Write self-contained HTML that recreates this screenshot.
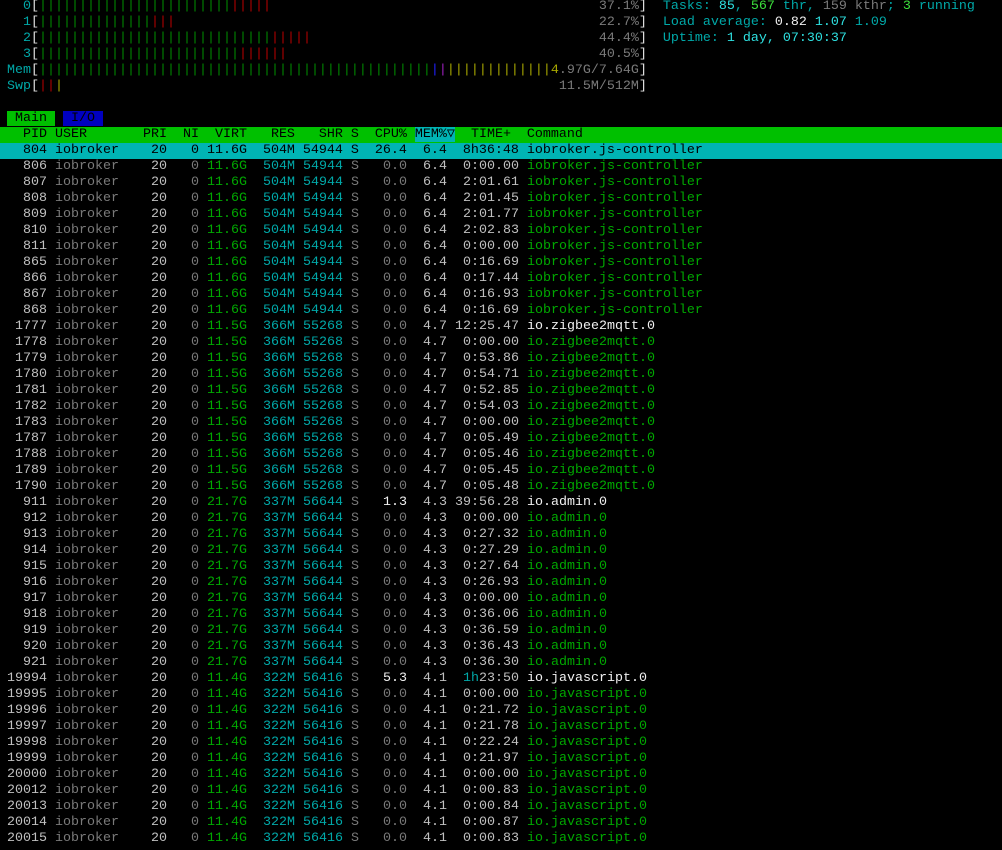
<!DOCTYPE html>
<html><head><meta charset="utf-8"><style>
html,body{margin:0;padding:0;background:#000;width:1002px;height:850px;overflow:hidden}
.s{position:absolute;top:-1px;left:0;width:1002px;font-family:"Liberation Mono","DejaVu Sans Mono",monospace;font-size:13.333px;line-height:16px;color:#c0c0c0}
.l{height:16px;white-space:pre;padding-left:7px}
.g{color:#00a800}.G{color:#3ce03c}.c{color:#00a8a8}.C{color:#2ee0e0}.d{color:#7a7a7a}.w{color:#c0c0c0}.W{color:#f0f0f0}
.r{color:#b00000}.b{color:#2020ff}.m{color:#a020c0}.y{color:#a8a800}.B{color:#e0e0e0}
.bg{color:#008800}
.hd{background:#00c000;color:#000}
.sel{background:#00b4b4;color:#000}
.tm{background:#00c000;color:#000}.ti{background:#0000c0;color:#000}
.mh{background:#00b4b4}
</style></head><body><div class="s">
<div class="l">  <span class="c">0</span><span class="B">[</span><span class="bg">||||||||||||||||||||||||</span><span class="r">|||||</span>                                         <span class="d">37.1%</span><span class="B">]</span>  <span class="c">Tasks: </span><span class="C">85</span><span class="c">, </span><span class="G">567</span><span class="c"> thr, </span><span class="d">159 kthr</span><span class="c">; </span><span class="G">3</span><span class="c"> running</span></div>
<div class="l">  <span class="c">1</span><span class="B">[</span><span class="bg">||||||||||||||</span><span class="r">|||</span>                                                     <span class="d">22.7%</span><span class="B">]</span>  <span class="c">Load average: </span><span class="W">0.82 </span><span class="C">1.07 </span><span class="c">1.09</span></div>
<div class="l">  <span class="c">2</span><span class="B">[</span><span class="bg">|||||||||||||||||||||||||||||</span><span class="r">|||||</span>                                    <span class="d">44.4%</span><span class="B">]</span>  <span class="c">Uptime: </span><span class="C">1 day, 07:30:37</span></div>
<div class="l">  <span class="c">3</span><span class="B">[</span><span class="bg">|||||||||||||||||||||||||</span><span class="r">||||||</span>                                       <span class="d">40.5%</span><span class="B">]</span></div>
<div class="l"><span class="c">Mem</span><span class="B">[</span><span class="bg">|||||||||||||||||||||||||||||||||||||||||||||||||</span><span class="b">|</span><span class="m">|</span><span class="y">|||||||||||||4</span><span class="d">.97G/7.64G</span><span class="B">]</span></div>
<div class="l"><span class="c">Swp</span><span class="B">[</span><span class="r">||</span><span class="y">|</span>                                                              <span class="d">11.5M/512M</span><span class="B">]</span></div>
<div class="l"> </div>
<div class="l"><span class="tm"> Main </span> <span class="ti"> I/O </span></div>
<div class="l hd">  PID USER       PRI  NI  VIRT   RES   SHR S  CPU% <span class="mh">MEM%▽</span>  TIME+  Command</div>
<div class="l sel">  804 iobroker    20   0 11.6G  504M 54944 S  26.4  6.4  8h36:48 iobroker.js-controller</div>
<div class="l"><span class="w">  806</span> <span class="d">iobroker</span>    20   <span class="d">0</span> <span class="g">11.6G</span>  <span class="c">504M</span> <span class="c">54944</span> <span class="d">S</span>   <span class="d">0.0</span>  6.4  0:00.00 <span class="g">iobroker.js-controller</span></div>
<div class="l"><span class="w">  807</span> <span class="d">iobroker</span>    20   <span class="d">0</span> <span class="g">11.6G</span>  <span class="c">504M</span> <span class="c">54944</span> <span class="d">S</span>   <span class="d">0.0</span>  6.4  2:01.61 <span class="g">iobroker.js-controller</span></div>
<div class="l"><span class="w">  808</span> <span class="d">iobroker</span>    20   <span class="d">0</span> <span class="g">11.6G</span>  <span class="c">504M</span> <span class="c">54944</span> <span class="d">S</span>   <span class="d">0.0</span>  6.4  2:01.45 <span class="g">iobroker.js-controller</span></div>
<div class="l"><span class="w">  809</span> <span class="d">iobroker</span>    20   <span class="d">0</span> <span class="g">11.6G</span>  <span class="c">504M</span> <span class="c">54944</span> <span class="d">S</span>   <span class="d">0.0</span>  6.4  2:01.77 <span class="g">iobroker.js-controller</span></div>
<div class="l"><span class="w">  810</span> <span class="d">iobroker</span>    20   <span class="d">0</span> <span class="g">11.6G</span>  <span class="c">504M</span> <span class="c">54944</span> <span class="d">S</span>   <span class="d">0.0</span>  6.4  2:02.83 <span class="g">iobroker.js-controller</span></div>
<div class="l"><span class="w">  811</span> <span class="d">iobroker</span>    20   <span class="d">0</span> <span class="g">11.6G</span>  <span class="c">504M</span> <span class="c">54944</span> <span class="d">S</span>   <span class="d">0.0</span>  6.4  0:00.00 <span class="g">iobroker.js-controller</span></div>
<div class="l"><span class="w">  865</span> <span class="d">iobroker</span>    20   <span class="d">0</span> <span class="g">11.6G</span>  <span class="c">504M</span> <span class="c">54944</span> <span class="d">S</span>   <span class="d">0.0</span>  6.4  0:16.69 <span class="g">iobroker.js-controller</span></div>
<div class="l"><span class="w">  866</span> <span class="d">iobroker</span>    20   <span class="d">0</span> <span class="g">11.6G</span>  <span class="c">504M</span> <span class="c">54944</span> <span class="d">S</span>   <span class="d">0.0</span>  6.4  0:17.44 <span class="g">iobroker.js-controller</span></div>
<div class="l"><span class="w">  867</span> <span class="d">iobroker</span>    20   <span class="d">0</span> <span class="g">11.6G</span>  <span class="c">504M</span> <span class="c">54944</span> <span class="d">S</span>   <span class="d">0.0</span>  6.4  0:16.93 <span class="g">iobroker.js-controller</span></div>
<div class="l"><span class="w">  868</span> <span class="d">iobroker</span>    20   <span class="d">0</span> <span class="g">11.6G</span>  <span class="c">504M</span> <span class="c">54944</span> <span class="d">S</span>   <span class="d">0.0</span>  6.4  0:16.69 <span class="g">iobroker.js-controller</span></div>
<div class="l"><span class="w"> 1777</span> <span class="d">iobroker</span>    20   <span class="d">0</span> <span class="g">11.5G</span>  <span class="c">366M</span> <span class="c">55268</span> <span class="d">S</span>   <span class="d">0.0</span>  4.7 12:25.47 <span class="W">io.zigbee2mqtt.0</span></div>
<div class="l"><span class="w"> 1778</span> <span class="d">iobroker</span>    20   <span class="d">0</span> <span class="g">11.5G</span>  <span class="c">366M</span> <span class="c">55268</span> <span class="d">S</span>   <span class="d">0.0</span>  4.7  0:00.00 <span class="g">io.zigbee2mqtt.0</span></div>
<div class="l"><span class="w"> 1779</span> <span class="d">iobroker</span>    20   <span class="d">0</span> <span class="g">11.5G</span>  <span class="c">366M</span> <span class="c">55268</span> <span class="d">S</span>   <span class="d">0.0</span>  4.7  0:53.86 <span class="g">io.zigbee2mqtt.0</span></div>
<div class="l"><span class="w"> 1780</span> <span class="d">iobroker</span>    20   <span class="d">0</span> <span class="g">11.5G</span>  <span class="c">366M</span> <span class="c">55268</span> <span class="d">S</span>   <span class="d">0.0</span>  4.7  0:54.71 <span class="g">io.zigbee2mqtt.0</span></div>
<div class="l"><span class="w"> 1781</span> <span class="d">iobroker</span>    20   <span class="d">0</span> <span class="g">11.5G</span>  <span class="c">366M</span> <span class="c">55268</span> <span class="d">S</span>   <span class="d">0.0</span>  4.7  0:52.85 <span class="g">io.zigbee2mqtt.0</span></div>
<div class="l"><span class="w"> 1782</span> <span class="d">iobroker</span>    20   <span class="d">0</span> <span class="g">11.5G</span>  <span class="c">366M</span> <span class="c">55268</span> <span class="d">S</span>   <span class="d">0.0</span>  4.7  0:54.03 <span class="g">io.zigbee2mqtt.0</span></div>
<div class="l"><span class="w"> 1783</span> <span class="d">iobroker</span>    20   <span class="d">0</span> <span class="g">11.5G</span>  <span class="c">366M</span> <span class="c">55268</span> <span class="d">S</span>   <span class="d">0.0</span>  4.7  0:00.00 <span class="g">io.zigbee2mqtt.0</span></div>
<div class="l"><span class="w"> 1787</span> <span class="d">iobroker</span>    20   <span class="d">0</span> <span class="g">11.5G</span>  <span class="c">366M</span> <span class="c">55268</span> <span class="d">S</span>   <span class="d">0.0</span>  4.7  0:05.49 <span class="g">io.zigbee2mqtt.0</span></div>
<div class="l"><span class="w"> 1788</span> <span class="d">iobroker</span>    20   <span class="d">0</span> <span class="g">11.5G</span>  <span class="c">366M</span> <span class="c">55268</span> <span class="d">S</span>   <span class="d">0.0</span>  4.7  0:05.46 <span class="g">io.zigbee2mqtt.0</span></div>
<div class="l"><span class="w"> 1789</span> <span class="d">iobroker</span>    20   <span class="d">0</span> <span class="g">11.5G</span>  <span class="c">366M</span> <span class="c">55268</span> <span class="d">S</span>   <span class="d">0.0</span>  4.7  0:05.45 <span class="g">io.zigbee2mqtt.0</span></div>
<div class="l"><span class="w"> 1790</span> <span class="d">iobroker</span>    20   <span class="d">0</span> <span class="g">11.5G</span>  <span class="c">366M</span> <span class="c">55268</span> <span class="d">S</span>   <span class="d">0.0</span>  4.7  0:05.48 <span class="g">io.zigbee2mqtt.0</span></div>
<div class="l"><span class="w">  911</span> <span class="d">iobroker</span>    20   <span class="d">0</span> <span class="g">21.7G</span>  <span class="c">337M</span> <span class="c">56644</span> <span class="d">S</span>   <span class="W">1.3</span>  4.3 39:56.28 <span class="W">io.admin.0</span></div>
<div class="l"><span class="w">  912</span> <span class="d">iobroker</span>    20   <span class="d">0</span> <span class="g">21.7G</span>  <span class="c">337M</span> <span class="c">56644</span> <span class="d">S</span>   <span class="d">0.0</span>  4.3  0:00.00 <span class="g">io.admin.0</span></div>
<div class="l"><span class="w">  913</span> <span class="d">iobroker</span>    20   <span class="d">0</span> <span class="g">21.7G</span>  <span class="c">337M</span> <span class="c">56644</span> <span class="d">S</span>   <span class="d">0.0</span>  4.3  0:27.32 <span class="g">io.admin.0</span></div>
<div class="l"><span class="w">  914</span> <span class="d">iobroker</span>    20   <span class="d">0</span> <span class="g">21.7G</span>  <span class="c">337M</span> <span class="c">56644</span> <span class="d">S</span>   <span class="d">0.0</span>  4.3  0:27.29 <span class="g">io.admin.0</span></div>
<div class="l"><span class="w">  915</span> <span class="d">iobroker</span>    20   <span class="d">0</span> <span class="g">21.7G</span>  <span class="c">337M</span> <span class="c">56644</span> <span class="d">S</span>   <span class="d">0.0</span>  4.3  0:27.64 <span class="g">io.admin.0</span></div>
<div class="l"><span class="w">  916</span> <span class="d">iobroker</span>    20   <span class="d">0</span> <span class="g">21.7G</span>  <span class="c">337M</span> <span class="c">56644</span> <span class="d">S</span>   <span class="d">0.0</span>  4.3  0:26.93 <span class="g">io.admin.0</span></div>
<div class="l"><span class="w">  917</span> <span class="d">iobroker</span>    20   <span class="d">0</span> <span class="g">21.7G</span>  <span class="c">337M</span> <span class="c">56644</span> <span class="d">S</span>   <span class="d">0.0</span>  4.3  0:00.00 <span class="g">io.admin.0</span></div>
<div class="l"><span class="w">  918</span> <span class="d">iobroker</span>    20   <span class="d">0</span> <span class="g">21.7G</span>  <span class="c">337M</span> <span class="c">56644</span> <span class="d">S</span>   <span class="d">0.0</span>  4.3  0:36.06 <span class="g">io.admin.0</span></div>
<div class="l"><span class="w">  919</span> <span class="d">iobroker</span>    20   <span class="d">0</span> <span class="g">21.7G</span>  <span class="c">337M</span> <span class="c">56644</span> <span class="d">S</span>   <span class="d">0.0</span>  4.3  0:36.59 <span class="g">io.admin.0</span></div>
<div class="l"><span class="w">  920</span> <span class="d">iobroker</span>    20   <span class="d">0</span> <span class="g">21.7G</span>  <span class="c">337M</span> <span class="c">56644</span> <span class="d">S</span>   <span class="d">0.0</span>  4.3  0:36.43 <span class="g">io.admin.0</span></div>
<div class="l"><span class="w">  921</span> <span class="d">iobroker</span>    20   <span class="d">0</span> <span class="g">21.7G</span>  <span class="c">337M</span> <span class="c">56644</span> <span class="d">S</span>   <span class="d">0.0</span>  4.3  0:36.30 <span class="g">io.admin.0</span></div>
<div class="l"><span class="w">19994</span> <span class="d">iobroker</span>    20   <span class="d">0</span> <span class="g">11.4G</span>  <span class="c">322M</span> <span class="c">56416</span> <span class="d">S</span>   <span class="W">5.3</span>  4.1  <span class="c">1h</span>23:50 <span class="W">io.javascript.0</span></div>
<div class="l"><span class="w">19995</span> <span class="d">iobroker</span>    20   <span class="d">0</span> <span class="g">11.4G</span>  <span class="c">322M</span> <span class="c">56416</span> <span class="d">S</span>   <span class="d">0.0</span>  4.1  0:00.00 <span class="g">io.javascript.0</span></div>
<div class="l"><span class="w">19996</span> <span class="d">iobroker</span>    20   <span class="d">0</span> <span class="g">11.4G</span>  <span class="c">322M</span> <span class="c">56416</span> <span class="d">S</span>   <span class="d">0.0</span>  4.1  0:21.72 <span class="g">io.javascript.0</span></div>
<div class="l"><span class="w">19997</span> <span class="d">iobroker</span>    20   <span class="d">0</span> <span class="g">11.4G</span>  <span class="c">322M</span> <span class="c">56416</span> <span class="d">S</span>   <span class="d">0.0</span>  4.1  0:21.78 <span class="g">io.javascript.0</span></div>
<div class="l"><span class="w">19998</span> <span class="d">iobroker</span>    20   <span class="d">0</span> <span class="g">11.4G</span>  <span class="c">322M</span> <span class="c">56416</span> <span class="d">S</span>   <span class="d">0.0</span>  4.1  0:22.24 <span class="g">io.javascript.0</span></div>
<div class="l"><span class="w">19999</span> <span class="d">iobroker</span>    20   <span class="d">0</span> <span class="g">11.4G</span>  <span class="c">322M</span> <span class="c">56416</span> <span class="d">S</span>   <span class="d">0.0</span>  4.1  0:21.97 <span class="g">io.javascript.0</span></div>
<div class="l"><span class="w">20000</span> <span class="d">iobroker</span>    20   <span class="d">0</span> <span class="g">11.4G</span>  <span class="c">322M</span> <span class="c">56416</span> <span class="d">S</span>   <span class="d">0.0</span>  4.1  0:00.00 <span class="g">io.javascript.0</span></div>
<div class="l"><span class="w">20012</span> <span class="d">iobroker</span>    20   <span class="d">0</span> <span class="g">11.4G</span>  <span class="c">322M</span> <span class="c">56416</span> <span class="d">S</span>   <span class="d">0.0</span>  4.1  0:00.83 <span class="g">io.javascript.0</span></div>
<div class="l"><span class="w">20013</span> <span class="d">iobroker</span>    20   <span class="d">0</span> <span class="g">11.4G</span>  <span class="c">322M</span> <span class="c">56416</span> <span class="d">S</span>   <span class="d">0.0</span>  4.1  0:00.84 <span class="g">io.javascript.0</span></div>
<div class="l"><span class="w">20014</span> <span class="d">iobroker</span>    20   <span class="d">0</span> <span class="g">11.4G</span>  <span class="c">322M</span> <span class="c">56416</span> <span class="d">S</span>   <span class="d">0.0</span>  4.1  0:00.87 <span class="g">io.javascript.0</span></div>
<div class="l"><span class="w">20015</span> <span class="d">iobroker</span>    20   <span class="d">0</span> <span class="g">11.4G</span>  <span class="c">322M</span> <span class="c">56416</span> <span class="d">S</span>   <span class="d">0.0</span>  4.1  0:00.83 <span class="g">io.javascript.0</span></div>
</div></body></html>
